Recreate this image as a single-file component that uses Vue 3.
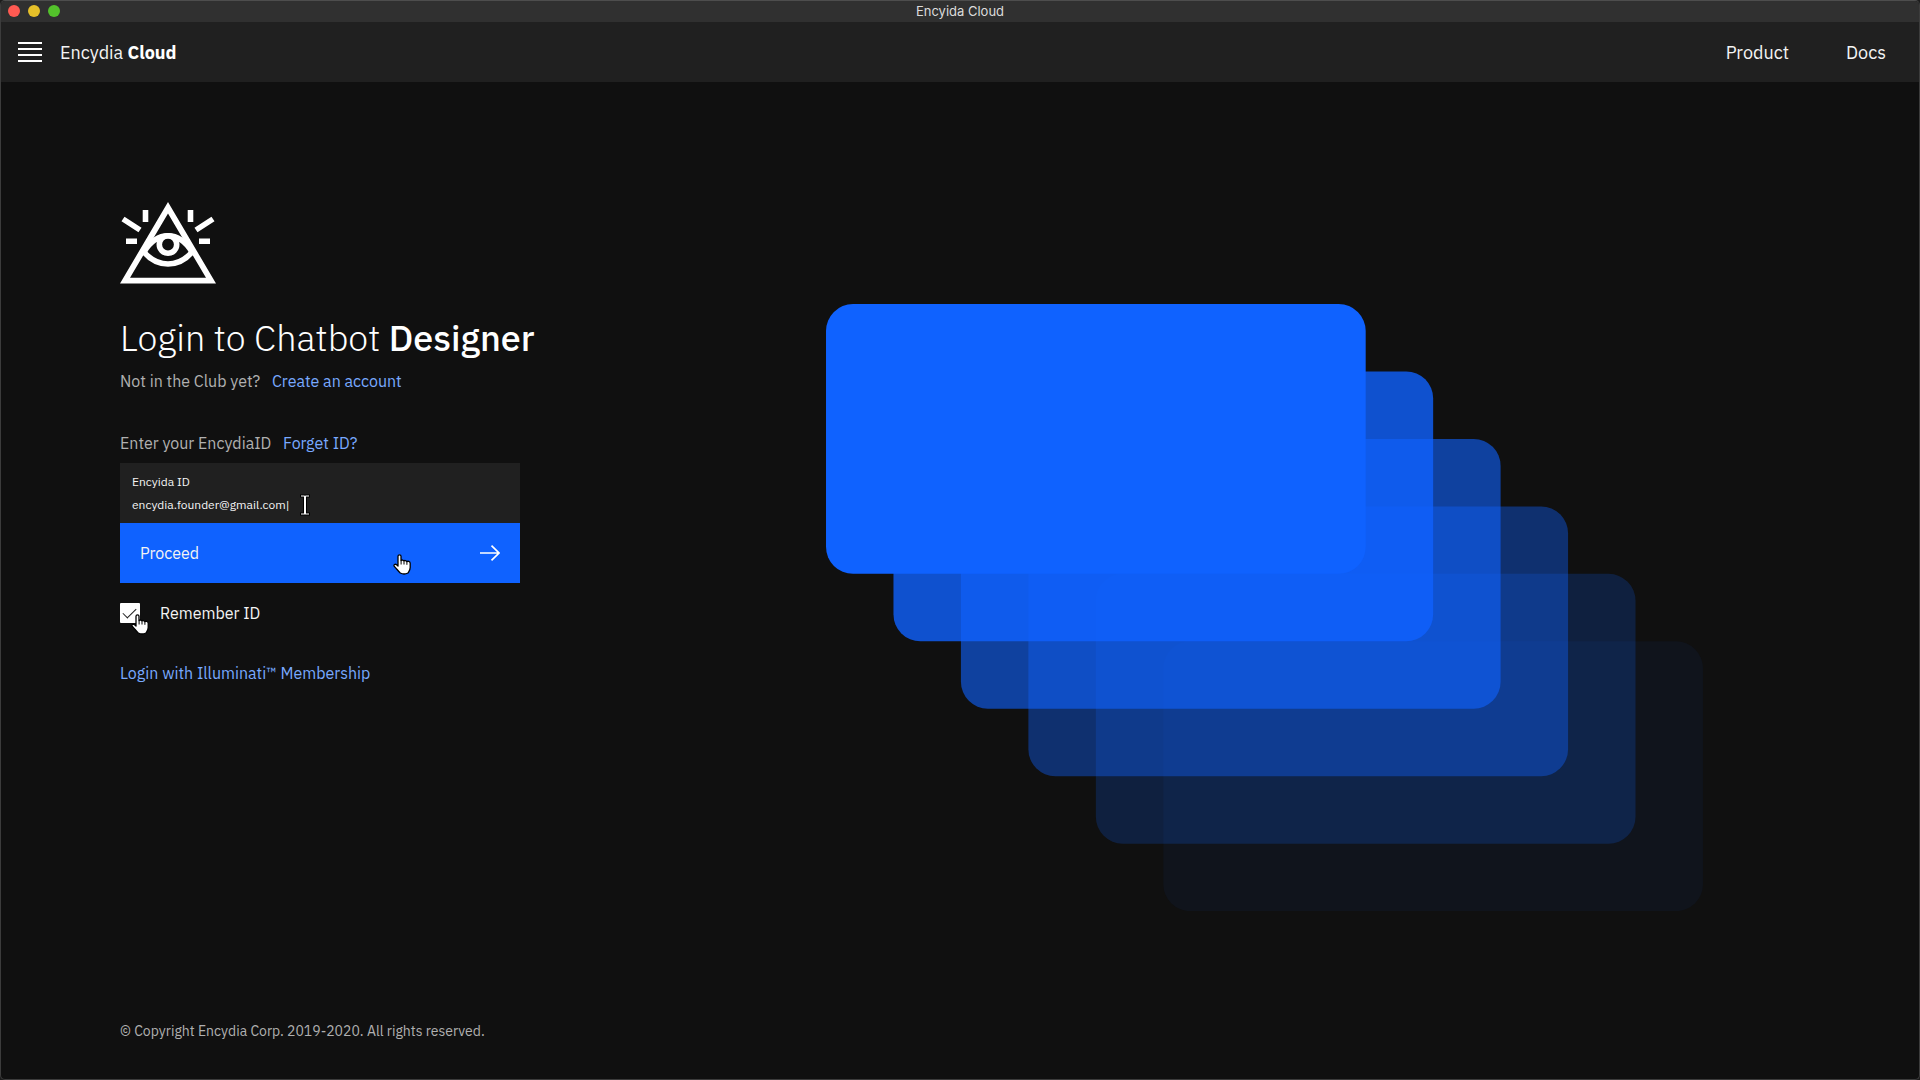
<script setup>
import { ref } from 'vue'

const encydiaId = ref('encydia.founder@gmail.com|')
const remember = ref(true)

const cards = [
  { step: 5, opacity: 0.05 },
  { step: 4, opacity: 0.2 },
  { step: 3, opacity: 0.4 },
  { step: 2, opacity: 0.6 },
  { step: 1, opacity: 0.8 },
  { step: 0, opacity: 1 },
]
</script>

<template>
  <div class="window">
    <div class="titlebar">
      <div class="lights">
        <span class="light close"></span>
        <span class="light minimise"></span>
        <span class="light expand"></span>
      </div>
      <span class="window-title">Encyida Cloud</span>
    </div>

    <header class="header">
      <button class="menu" type="button" aria-label="Menu">
        <span></span><span></span><span></span><span></span>
      </button>
      <a class="brand" href="#">Encydia <b>Cloud</b></a>
      <nav class="nav">
        <a href="#">Product</a>
        <a href="#">Docs</a>
      </nav>
    </header>

    <main class="main">
      <form class="login" @submit.prevent>
        <svg class="logo" viewBox="0 0 96 82" aria-hidden="true">
          <path fill="#fff" fill-rule="evenodd" d="M48 0 96 81.500H0ZM48 11.500 10 75.800H86Z" />
          <g fill="none" stroke="#fff" stroke-width="5.6">
            <path d="M24 50C31 38.500 39 33.800 48 33.800S65 38.500 72 50" />
            <path d="M23 49C30 57.500 38 62 48 62S66 57.500 73 49" />
            <circle cx="48" cy="42.500" r="8.700" />
            <path d="M25.500 8V20M70.500 8V20M6 39.300H17M79 39.300H90M3 17 20 28M93 17 76 28" />
          </g>
        </svg>

        <h1>Login to Chatbot <b>Designer</b></h1>
        <p class="line">Not in the Club yet? <a href="#">Create an account</a></p>
        <p class="line prompt">Enter your EncydiaID <a href="#">Forget ID?</a></p>

        <div class="field">
          <label for="encydia-id">Encyida ID</label>
          <input id="encydia-id" v-model="encydiaId" type="text" autocomplete="off" spellcheck="false" />
          <svg class="pointer ibeam" viewBox="0 0 10 22" aria-hidden="true">
            <path d="M0 .5H10V3.500H7V18.500H10V21.500H0V18.500H3V3.500H0Z" fill="#000" />
            <path d="M1 1.500H4.500L5 2 5.500 1.500H9V2.500H6V19.500H9V20.500H1V19.500H4V2.500H1Z" fill="#fff" />
          </svg>
        </div>

        <button class="proceed" type="submit">
          <span>Proceed</span>
          <svg class="arrow" viewBox="0 0 20 16" aria-hidden="true">
            <path d="M0 8H19M11.500 .700 19 8 11.500 15.300" fill="none" stroke="#fff" stroke-width="1.700" />
          </svg>
          <svg class="pointer hand on-button" viewBox="0 0 18 21" aria-hidden="true">
            <path d="M5 2.200C5 .300 8 .300 8 2.200V6.500C8.600 5.800 10.500 5.800 10.900 6.900 11.600 6.200 13.300 6.400 13.700 7.600 14.700 6.900 17.200 7.200 17.200 9.200V13.500C17.200 16 16 17.300 15 19Q11 21 7.300 19C5.500 17.500 3.600 14.700 1.200 12.200 .300 10.800 2.200 9.600 3.600 10.700L5 12Z" fill="#fff" stroke="#000" stroke-width="1.300" stroke-linejoin="round" />
            <path d="M8.100 6.500V10.500M11 7V10.500M13.900 7.600V10.800" stroke="#000" stroke-width="1" />
          </svg>
        </button>

        <div class="remember">
          <input id="remember" v-model="remember" type="checkbox" />
          <label for="remember">Remember ID</label>
          <svg class="pointer hand on-check" viewBox="0 0 18 21" aria-hidden="true">
            <path d="M5 2.200C5 .300 8 .300 8 2.200V6.500C8.600 5.800 10.500 5.800 10.900 6.900 11.600 6.200 13.300 6.400 13.700 7.600 14.700 6.900 17.200 7.200 17.200 9.200V13.500C17.200 16 16 17.300 15 19Q11 21 7.300 19C5.500 17.500 3.600 14.700 1.200 12.200 .300 10.800 2.200 9.600 3.600 10.700L5 12Z" fill="#fff" stroke="#000" stroke-width="1.300" stroke-linejoin="round" />
            <path d="M8.100 6.500V10.500M11 7V10.500M13.900 7.600V10.800" stroke="#000" stroke-width="1" />
          </svg>
        </div>

        <a class="membership" href="#">Login with Illuminati™ Membership</a>
      </form>

      <svg class="art" viewBox="0 0 1170 810" aria-hidden="true">
        <rect
          v-for="card in cards"
          :key="card.step"
          :x="card.step * 90"
          :y="card.step * 90"
          width="720"
          height="360"
          rx="36"
          fill="#0f62ff"
          :fill-opacity="card.opacity"
        />
      </svg>
    </main>

    <footer class="footer">© Copyright Encydia Corp. 2019-2020. All rights reserved.</footer>
  </div>
</template>

<style>
body {
  background: #1c1c1c;
}
</style>

<style scoped>
* {
  box-sizing: border-box;
}

.window {
  display: flex;
  flex-direction: column;
  min-height: 100vh;
  border: 1px solid #3c3c3c;
  border-top-color: #4d4d4d;
  border-radius: 5px;
  overflow: hidden;
  background: #101010;
  color: #f4f4f4;
  font-family: "IBM Plex Sans", Roboto, "Liberation Sans", sans-serif;
  font-size: 16px;
  line-height: 20px;
}

a {
  color: #78a9ff;
  text-decoration: none;
}

button,
input {
  font: inherit;
  color: inherit;
  border: 0;
  padding: 0;
  background: none;
}

.titlebar {
  display: grid;
  grid-template-columns: 1fr auto 1fr;
  align-items: center;
  height: 21px;
  padding: 0 7px;
  background: #303030;
}

.lights {
  display: flex;
  gap: 8px;
  padding-bottom: 2px;
}

.light {
  width: 12px;
  height: 12px;
  border-radius: 50%;
}

.close {
  background: #ff5a52;
}

.minimise {
  background: #e6c029;
}

.expand {
  background: #53c22b;
}

.window-title {
  padding-bottom: 2px;
  color: #dcdcdc;
  font-family: Inter, "Liberation Sans", sans-serif;
  font-size: 13px;
}

.header {
  display: flex;
  align-items: center;
  height: 60px;
  padding: 0 33px 0 17px;
  background: #202020;
  font-size: 18px;
}

.menu {
  display: flex;
  flex-direction: column;
  gap: 4px;
  width: 24px;
  margin-right: 18px;
}

.menu span {
  height: 2px;
  background: #fff;
}

.header a {
  color: #f4f4f4;
  line-height: 22px;
}

.header .brand b {
  color: #fff;
}

.brand,
.nav {
  padding-top: 2px;
}

.nav {
  display: flex;
  gap: 57px;
  margin-left: auto;
}

.main {
  display: flex;
  justify-content: space-between;
  align-items: flex-start;
  flex: 1;
  gap: 60px;
  padding: 120px 216px 60px 119px;
}

.login {
  display: flex;
  flex-direction: column;
  align-items: flex-start;
  flex: 0 0 400px;
}

.logo {
  width: 96px;
  height: 82px;
}

h1 {
  margin: 32px 0 11px;
  color: #fff;
  font-size: 36px;
  font-weight: 300;
  line-height: 44px;
  white-space: nowrap;
}

h1 b {
  font-weight: 500;
}

.line {
  margin: 0;
  color: #b0b0b0;
}

.line a {
  margin-left: 8px;
}

.prompt {
  margin: 42px 0 10px;
}

.field {
  position: relative;
  width: 400px;
  height: 60px;
  padding: 9px 12px;
  background: #202020;
  font-size: 12px;
}

.field label,
.field input {
  display: block;
  width: 100%;
  height: 20px;
}

.field input {
  margin-top: 3px;
  outline: none;
}

.proceed {
  position: relative;
  display: flex;
  justify-content: space-between;
  align-items: center;
  width: 400px;
  height: 60px;
  padding: 0 20px;
  background: #0f62ff;
}

.arrow {
  width: 20px;
  height: 16px;
}

.pointer {
  position: absolute;
  pointer-events: none;
}

.ibeam {
  left: 180px;
  top: 31px;
  width: 10px;
  height: 22px;
}

.hand {
  width: 18px;
  height: 21px;
}

.on-button {
  left: 273px;
  top: 31px;
}

.on-check {
  left: 11px;
  top: 11px;
}

.remember {
  position: relative;
  display: flex;
  align-items: center;
  gap: 20px;
  margin: 20px 0 40px;
}

.remember input {
  appearance: none;
  display: grid;
  place-items: center;
  width: 20px;
  height: 20px;
  margin: 0;
  padding-right: 1px;
  border-radius: 1px;
  background: #fff;
}

.remember input:checked::before {
  content: "";
  width: 12px;
  height: 6px;
  margin-top: -3px;
  border: solid #202020;
  border-width: 0 0 1px 1px;
  transform: rotate(-45deg);
}

.art {
  flex: 0 1 877px;
  min-width: 0;
  margin-top: 102px;
}

.footer {
  padding: 0 119px 38px;
  color: #b0b0b0;
  font-size: 14px;
}
</style>
